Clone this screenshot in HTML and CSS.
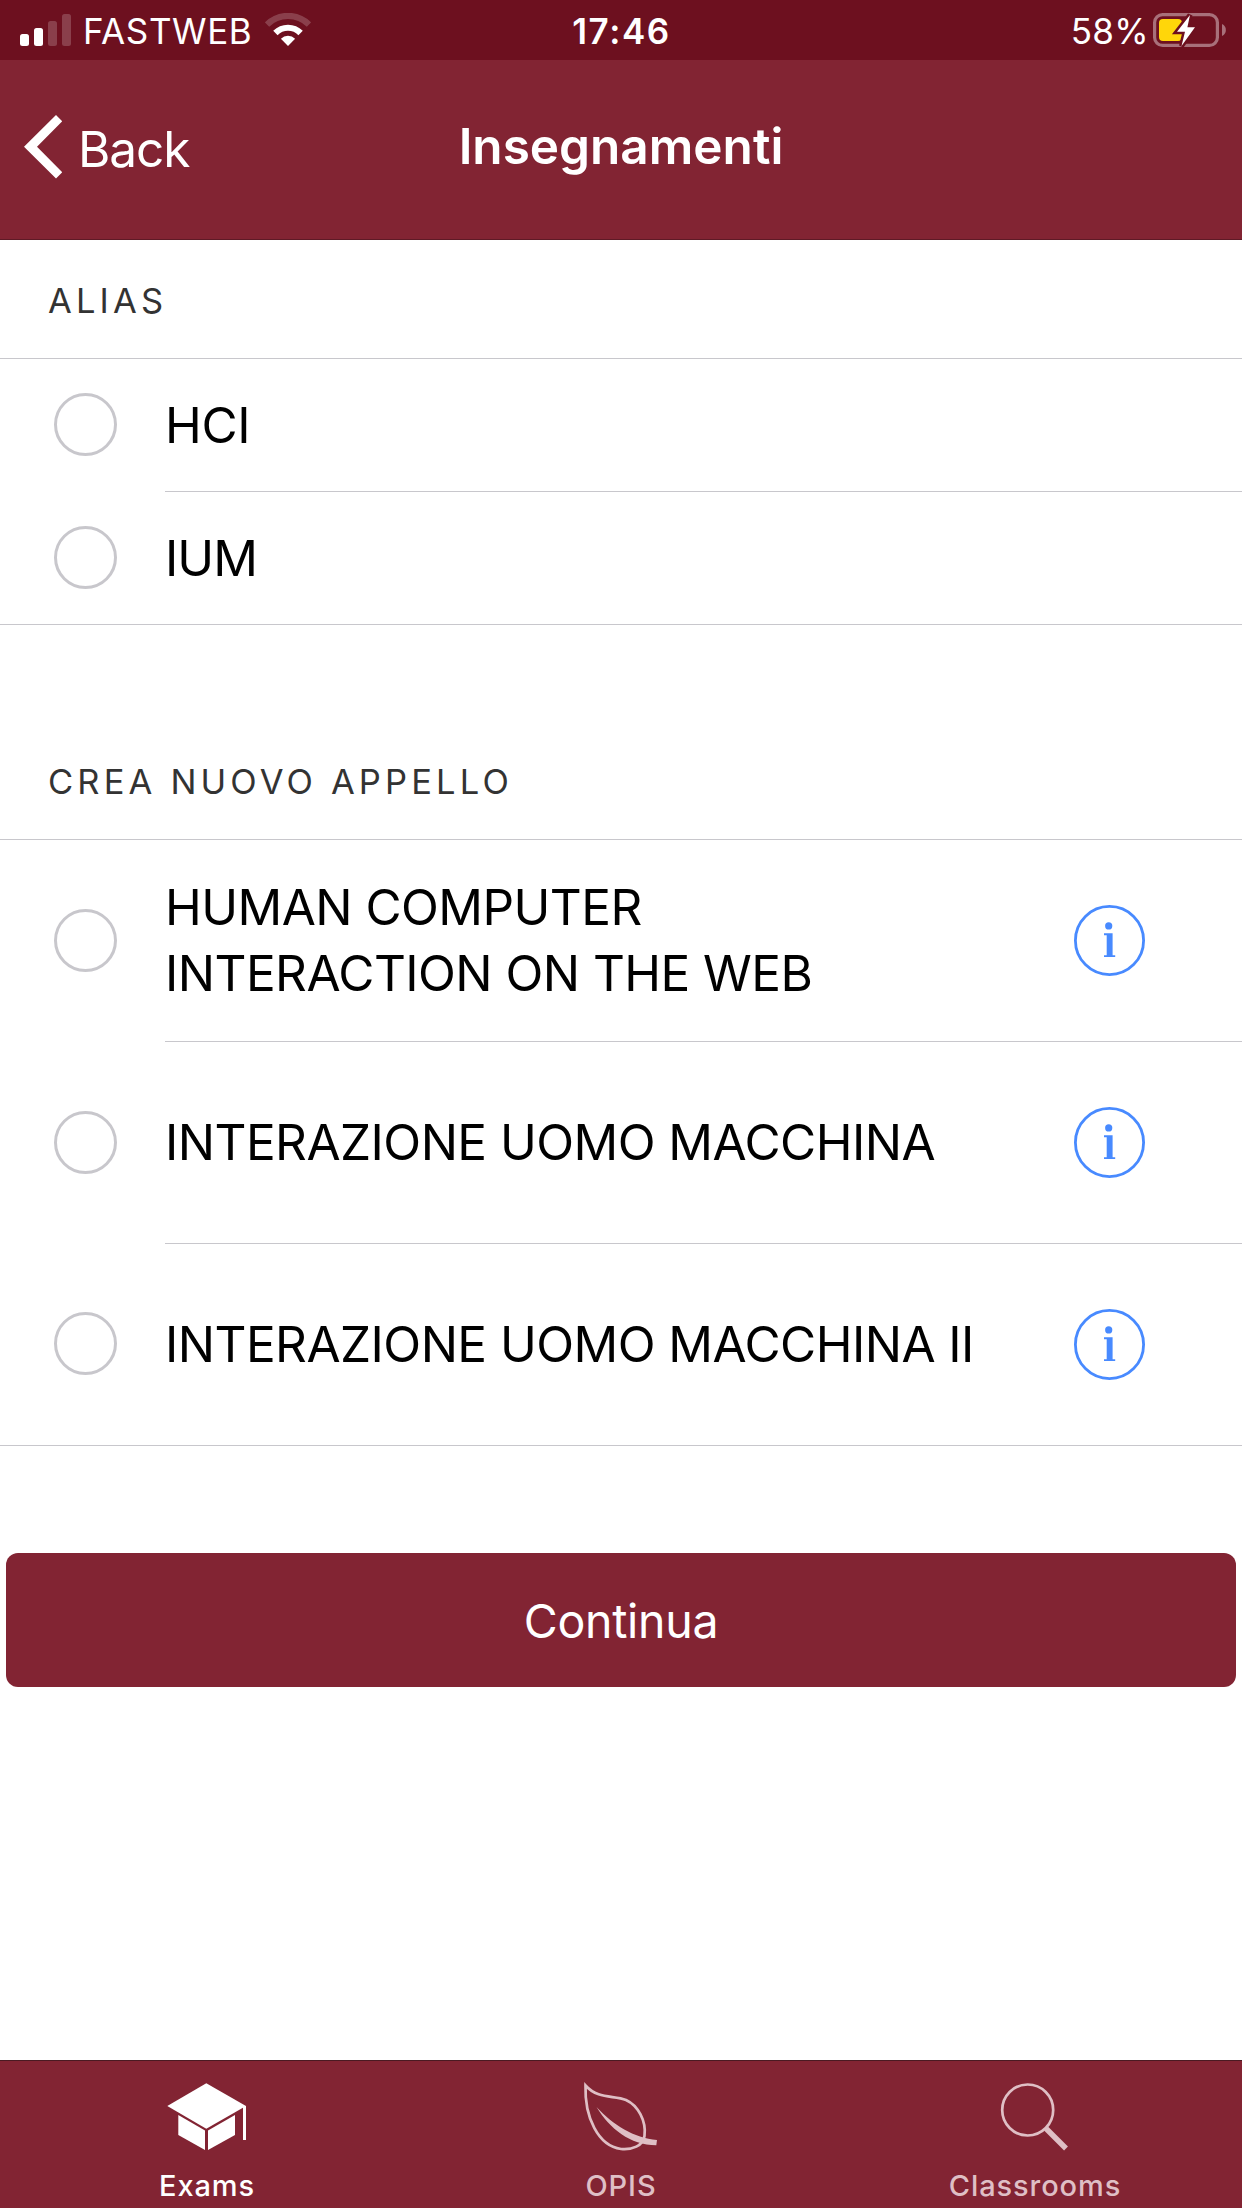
FILE: index.html
```html
<!DOCTYPE html>
<html lang="it">
<head>
<meta charset="utf-8">
<title>Insegnamenti</title>
<link rel="stylesheet" href="styles.css">
</head>
<body>
<svg class="defs" width="0" height="0">
  <symbol id="info" viewBox="0 0 71 71">
    <circle cx="35.5" cy="35.5" r="34.1" fill="none" stroke="currentColor" stroke-width="2.8"/>
    <circle cx="34.7" cy="20.9" r="3.6"/>
    <path d="M30 28.2h8.600v22h2.600v1.800H30v-1.800h2.700v-20H30z"/>
  </symbol>
</svg>
<div class="screen">
  <div class="status">
    <div class="status-left">
      <svg class="signal" width="51" height="32" viewBox="0 0 51 32" fill="#fff">
        <rect x="0" y="20" width="9" height="12" rx="2.5"/>
        <rect x="14" y="14" width="9" height="18" rx="2.5"/>
        <rect x="28" y="7" width="9" height="25" rx="2.5" opacity=".2"/>
        <rect x="42" y="0" width="9" height="32" rx="2.5" opacity=".2"/>
      </svg>
      <span class="carrier">FASTWEB</span>
      <svg class="wifi" width="46" height="33" viewBox="265 13 46 33" fill="none" stroke="#fff" stroke-width="6.2">
        <path d="M267 24.6A29.7 29.7 0 0 1 309 24.6" opacity=".2"/>
        <path d="M275.4 33A17.8 17.8 0 0 1 300.6 33"/>
        <path d="M280.9 38.8A10 10 0 0 1 295.1 38.8L288 45.9z" fill="#fff" stroke="none"/>
      </svg>
    </div>
    <span class="time">17:46</span>
    <div class="status-right">
      <span class="percent">58%</span>
      <svg class="battery" width="74" height="36" viewBox="1152 12 74 36">
        <rect x="1154.6" y="14.6" width="62.8" height="30.8" rx="8" fill="none" stroke="#a8707a" stroke-width="3.2"/>
        <path d="M1222 24a6.6 6.6 0 0 1 0 12z" fill="#a8707a"/>
        <rect x="1159" y="19" width="23" height="22" rx="4" fill="#ffd60a"/>
        <path d="M1190 15L1177 31.8h8L1181.500 46L1195 27.200h-7.600z" fill="#fff" stroke="#6d101f" stroke-width="5" paint-order="stroke"/>
      </svg>
    </div>
  </div>

  <header class="nav">
    <a class="back">
      <svg class="chevron" width="38" height="64" viewBox="24 115 38 64" fill="#fff"><path d="M56 115L62.200 121.300L37 146.700L62.200 172.200L56 178.500L24 146.700z"/></svg>
      <span class="back-label">Back</span>
    </a>
    <h1 class="title">Insegnamenti</h1>
  </header>

  <main class="content">
    <section class="group">
      <h2 class="group-title">ALIAS</h2>
      <label class="row"><span class="radio"></span><span class="row-body short">HCI</span></label>
      <label class="row"><span class="radio"></span><span class="row-body ium">IUM</span></label>
    </section>

    <section class="group tall">
      <h2 class="group-title">CREA NUOVO APPELLO</h2>
      <label class="row"><span class="radio"></span><span class="row-body"><span class="name">HUMAN COMPUTER<br>INTERACTION ON THE WEB</span><svg class="info"><use href="#info"/></svg></span></label>
      <label class="row"><span class="radio"></span><span class="row-body"><span class="name">INTERAZIONE UOMO MACCHINA</span><svg class="info"><use href="#info"/></svg></span></label>
      <label class="row"><span class="radio"></span><span class="row-body"><span class="name">INTERAZIONE UOMO MACCHINA II</span><svg class="info"><use href="#info"/></svg></span></label>
    </section>

    <button class="submit">Continua</button>
  </main>

  <nav class="tabs">
    <a class="tab active">
      <svg width="84" height="72" viewBox="165 2080 84 72" fill="currentColor">
        <path d="M206.300 2083.300L246 2106L206.300 2128.700L167.300 2106z"/>
        <path d="M178.300 2115L205 2130.500V2150L178.300 2135z"/>
        <path d="M208 2130.500L235 2115V2135L208 2150z"/>
        <path d="M243 2106h3v34h-3z"/>
      </svg>
      <span class="tab-label">Exams</span>
    </a>
    <a class="tab">
      <svg width="84" height="72" viewBox="579 2080 84 72" fill="currentColor">
        <path d="M585.500 2085.500C598 2099.500 614 2095 626 2100C638 2105.500 646.500 2121 644.500 2136C643 2146 632 2150 621 2149C598 2146 584.500 2117 585.500 2085.500z" fill="none" stroke="currentColor" stroke-width="2.700"/>
        <path d="M596.500 2107C613 2125 634 2138 657 2140L656.300 2145.200C630 2145 610 2129 596.500 2107z"/>
      </svg>
      <span class="tab-label">OPIS</span>
    </a>
    <a class="tab">
      <svg width="84" height="72" viewBox="993 2080 84 72" fill="none" stroke="currentColor">
        <circle cx="1027.700" cy="2110" r="25.500" stroke-width="2.700"/>
        <path d="M1046 2128.500L1066 2148.500" stroke-width="5.500"/>
      </svg>
      <span class="tab-label">Classrooms</span>
    </a>
  </nav>
</div>
</body>
</html>
```
FILE: styles.css
```css
* { box-sizing: border-box; }

body {
  margin: 0;
  background: #fff;
  color: #000;
  font-family: "Inter", "Liberation Sans", sans-serif;
  font-kerning: normal;
}

svg { display: block; flex: none; }
.defs { position: absolute; }

.screen {
  display: flex;
  flex-direction: column;
  height: 2208px;
  width: 1242px;
}

/* status bar */
.status {
  display: grid;
  grid-template-columns: 1fr auto 1fr;
  align-items: center;
  height: 60px;
  padding: 1px 16px 0 20px;
  background: #6d101f;
  color: #fff;
  font-size: 35px;
  line-height: 42px;
}
.status-left, .status-right { display: flex; align-items: center; }
.status-right { justify-content: flex-end; gap: 3px; }
.signal { margin: -1px 12px 0 0; }
.carrier { letter-spacing: .6px; margin-right: 13px; }
.wifi { margin-top: -2px; }
.time { font-weight: 600; letter-spacing: 1.6px; margin-right: 3px; }
.percent { letter-spacing: .3px; }
.battery { margin-top: -1px; }

/* navigation bar */
.nav {
  display: grid;
  grid-template-columns: 1fr auto 1fr;
  align-items: center;
  height: 180px;
  padding: 0 24px 7px;
  background: #822433;
  border-bottom: 1px solid #5e1a26;
  color: #fff;
  font-size: 49.5px;
  line-height: 60px;
}
.back { display: flex; align-items: center; gap: 16px; }
.chevron { margin-top: 2px; }
.back-label { padding-top: 6px; letter-spacing: -1.1px; }
.title { margin: 0; font-size: inherit; font-weight: 600; }

/* lists */
.content { flex: 1; }
.group + .group { margin-top: 96px; }
.group-title {
  margin: 0;
  height: 119px;
  padding: 4px 0 0 48px;
  border-bottom: 1px solid #c8c7cc;
  color: #333;
  font-size: 34.5px;
  font-weight: 400;
  letter-spacing: 4.15px;
  line-height: 113px;
}
.row {
  display: flex;
  align-items: center;
  height: 133px;
  padding-left: 54px;
  gap: 48px;
}
.tall .row { height: 202px; }
.row:last-child { border-bottom: 1px solid #c8c7cc; }
.radio {
  flex: none;
  width: 63px;
  height: 63px;
  margin-bottom: 2px;
  border: 3px solid #c8c7cc;
  border-radius: 50%;
}
.row-body {
  flex: 1;
  display: flex;
  align-items: center;
  justify-content: space-between;
  align-self: stretch;
  padding-right: 97px;
  border-bottom: 1px solid #c8c7cc;
  font-size: 49.5px;
  letter-spacing: -.55px;
  line-height: 66px;
}
.name { margin-bottom: 2px; }
.row:last-child .row-body { border-bottom: 0; }
.row-body.short { letter-spacing: -.3px; }
.row-body.ium { letter-spacing: -1px; }
.info { width: 71px; height: 71px; color: #488aff; fill: currentColor; }

.submit {
  display: block;
  width: 1230px;
  height: 134px;
  margin: 107px 6px 0;
  padding: 2px 0 0;
  border: 0;
  border-radius: 12px;
  background: #822433;
  color: #fff;
  font: 400 46.5px/60px "Inter", "Liberation Sans", sans-serif;
  letter-spacing: -.3px;
}

/* tab bar */
.tabs {
  display: grid;
  grid-template-columns: repeat(3, 1fr);
  height: 148px;
  border-top: 1px solid #4a1a22;
  background: #822433;
}
.tab {
  display: flex;
  flex-direction: column;
  align-items: center;
  gap: 16px;
  padding-top: 19px;
  color: #dfbfc5;
}
.tab.active { color: #fff; }
.tab-label {
  font-size: 29px;
  font-weight: 500;
  letter-spacing: .9px;
  line-height: 36px;
}
```
